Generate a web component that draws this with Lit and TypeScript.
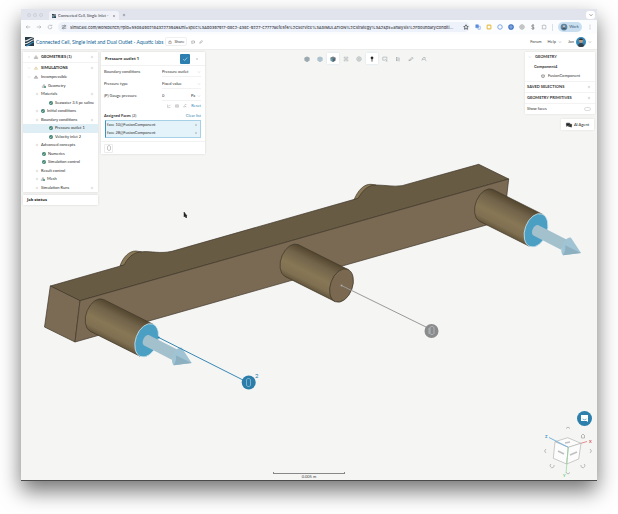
import { LitElement, html, css, svg } from "lit";
import { customElement } from "lit/decorators.js";
import { classMap } from "lit/directives/class-map.js";

const paths: Record<string, unknown> = {
  down: svg`<path d="M4 6l4 4 4-4"/>`,
  right: svg`<path d="M6 4l4 4-4 4"/>`,
  plus: svg`<path d="M8 3v10M3 8h10"/>`,
  close: svg`<path d="M4 4l8 8M12 4l-8 8"/>`,
  check: svg`<path d="M3 8l4 4 7-8"/>`,
  back: svg`<path d="M14 8H3M7 4L3 8l4 4"/>`,
  forward: svg`<path d="M2 8h11M9 4l4 4-4 4"/>`,
  reload: svg`<path d="M13 8a5 5 0 1 1-2-4M13 2v3h-3"/>`,
  tune: svg`<path d="M2 5h6M12 5h2M2 11h2M8 11h6"/><circle cx="10" cy="5" r="2"/><circle cx="6" cy="11" r="2"/>`,
  star: svg`<path d="M8 2l2 4 4 1-3 3 1 4-4-2-4 2 1-4-3-3 4-1z" stroke-width="2"/>`,
  dots: svg`<path d="M8 2v2M8 7v2M8 12v2" stroke-width="2"/>`,
  lock: svg`<path d="M3 7h10v7H3zM5 7V4l3-2 3 2v3"/>`,
  comment: svg`<path d="M3 4h11v8H8l-5 2z"/>`,
  pen: svg`<path d="M3 13l1-4 7-7 3 3-7 7z"/>`,
  mesh: svg`<path d="M8 2l3 3v3H5V5zM4 9l3 2v3H1v-3zM12 9l3 2v3H9v-3z"/>`,
  meshDone: svg`<path d="M8 1l3 3v3H5V4zM4 8l3 2v4H1v-4z" stroke="#555"/><circle cx="12" cy="12" r="4" fill="#3d8270" stroke="none"/>`,
  sims: svg`<path d="M8 3l3 4H5zM4 9l3 4H1zM12 9l3 4H9z"/>`,
  cube: svg`<path d="M8 2l6 3v7l-6 3-6-3V5zM2 5l6 3 6-3M8 8v7"/>`,
  cubeFull: svg`<path d="M8 2l6 3v7l-6 3-6-3V5z" fill="#9fb0b8"/><path d="M2 5l6 3 6-3M8 8v7"/>`,
  cubeBlue: svg`<path d="M8 2l6 3v7l-6 3-6-3V5z" fill="#b5ccd7" stroke="#93adba"/><path d="M2 5l6 3 6-3M8 8v7" stroke="#93adba"/>`,
  cubeDark: svg`<path d="M8 2l6 3-6 3-6-3z" fill="#74838c" stroke="#55636b"/><path d="M2 5l6 3v7l-6-3z" fill="#58b0cd" stroke="#55636b"/><path d="M14 5L8 8v7l6-3z" fill="#55636b" stroke="#55636b"/>`,
  wire: svg`<path d="M3 3h3M10 3h3M3 13h3M10 13h3M3 3v3M13 3v3M3 10v3M13 10v3M8 2v12M3 8h10"/>`,
  sphere: svg`<circle cx="8" cy="8" r="6"/><path d="M2 8h12M8 2v12"/>`,
  pin: svg`<circle cx="8" cy="5" r="3" fill="currentColor"/><path d="M8 6v9" stroke-width="2"/>`,
  boxsel: svg`<path d="M2 3h11v7M2 3v8h7M9 8l5 6M10 14l4-1"/>`,
  layers: svg`<path d="M3 4l10 2M3 8l10 1M3 12l10 1M4 3v10"/>`,
  ruler: svg`<path d="M2 13L11 3l3 3-8 5zM3 9l3 4"/>`,
  probe: svg`<path d="M2 12l4-8h5v5l3 5M3 9h7"/>`,
  chart: svg`<path d="M2 2v12h12M5 10l3-4 2 2 4-5"/>`,
  table: svg`<path d="M2 3h12v10H2zM2 8h12M8 3v10"/>`,
  fx: svg`<path d="M2 9l2 4 4-11h6M8 8l5 5M13 8l-5 5"/>`,
  cylinder: svg`<path d="M4 4c0-3 8-3 8 0v8c0 3-8 3-8 0z"/>`,
  done: svg`<circle cx="8" cy="8" r="8" fill="#3d8270" stroke="none"/><path d="M4 8l3 3 5-6" stroke="#fff" stroke-width="2"/>`,
  bubble: svg`<path d="M1 3h9v6H5l-3 3V9H1z" fill="currentColor"/><path d="M11 6h4v6h-1v2l-3-2H7v-2h4z" fill="currentColor"/>`,
  puzzle: svg`<path d="M3 4h3c0-3 4-3 4 0h3v9H3v-3c2 0 2-3 0-3z"/>`,
  tag: svg`<path d="M11 4C7 1 3 4 5 7c2 2 6 1 6 4s-5 3-7 1M8 1v14" stroke-width="2"/>`,
  square: svg`<rect x="3" y="3" width="10" height="10" rx="2" stroke-width="3"/>`,
  ring: svg`<circle cx="8" cy="8" r="6" stroke-width="2"/>`,
  disc: svg`<circle cx="8" cy="8" r="6" fill="#7fa3d8" stroke-width="3"/>`,
  person: svg`<circle cx="8" cy="8" r="9" fill="#5c88a5" stroke="none"/><circle cx="8" cy="6" r="3" fill="#d8bda8" stroke="none"/><path d="M3 14c1-5 9-5 10 0" fill="#40525f" stroke="none"/>`,
  trans: svg`<path d="M2 2h7v8H2z" fill="currentColor"/><path d="M8 6h6v8H8z"/>`,
  logo: svg`<path d="M0 0h16v16H0z" fill="#2a3b48" stroke="none"/><path d="M0 7C6 7 8 2 16 1M0 12c7 0 9-6 16-7" stroke="#e8eef2" stroke-width="2"/><path d="M2 16c6-1 8-6 14-7" stroke="#3a8fc0" stroke-width="2"/>`,
};

const icon = (name: string, cls = "") =>
  html`<svg class="icon ${cls}" viewBox="0 0 16 16" aria-hidden="true">${paths[name]}</svg>`;

const shared = css`
  :host { display: block; box-sizing: border-box; }
  * { box-sizing: border-box; }
  button, input, select {
    font: inherit; color: inherit; border: 0; margin: 0; padding: 0;
    background: none; border-radius: 0; appearance: none; outline: 0;
  }
  a { color: inherit; text-decoration: none; }
  button { display: flex; align-items: center; justify-content: center; }
  .icon {
    width: 6px; height: 6px; flex: none; display: block; fill: none;
    stroke: currentColor; stroke-width: 1.3; overflow: visible;
  }
  .icon.s { width: 4px; height: 4px; }
  .grow { flex: 1; min-width: 0; }
  h2, h3 { margin: 0; font: inherit; font-weight: 700; }
  ul { margin: 0; padding: 0; list-style: none; }
`;

@customElement("browser-bar")
class BrowserBar extends LitElement {
  static styles = [shared, css`
    .tabs { display: flex; align-items: center; height: 11px; padding: 0 2px 0 6px; background: #e1e4ed; color: #30333a; }
    .lights { display: flex; gap: 2px; width: 22px; }
    .lights i { width: 4px; height: 4px; border: 1px solid #cfd1d7; border-radius: 50%; }
    .tab { display: flex; align-items: center; gap: 2px; height: 9px; align-self: flex-end; width: 70px; padding: 0 3px; background: #f0f2f8; border-radius: 3px 3px 0 0; }
    .name { flex: 1; overflow: hidden; white-space: nowrap; }
    .new { margin-left: 3px; }
    .menu { width: 9px; height: 8px; border-radius: 3px; background: #fff; }
    .bar { display: flex; align-items: center; height: 14px; padding: 0 4px; gap: 5px; background: #fbfcfe; color: #8b8f96; }
    .url { flex: 1; min-width: 0; display: flex; align-items: center; gap: 3px; height: 10px; padding: 0 1px 0 3px; border-radius: 5px; background: #eef2fa; color: #3c4046; }
    .url input { flex: 1; min-width: 0; height: 8px; font-family: Inter, sans-serif; font-weight: 500; text-overflow: ellipsis; }
    .ext { display: flex; gap: 5px; }
    .blue { color: #5b8ee0; } .gold { color: #e8bf4a; } .navy { color: #3c6fc4; } .grey { color: #777; }
    .work { gap: 2px; width: 24px; height: 10px; border-radius: 5px; background: #c9dff0; color: #41607a; }
    .sep { width: 1px; height: 7px; background: #dcdfe6; }
    .nav { display: flex; gap: 5px; }
  `];
  render() {
    return html`
      <div class="tabs">
        <span class="lights"><i></i><i></i><i></i></span>
        <div class="tab">${icon("logo", "s")}<span class="name">Connected Cell, Single Inlet -</span>
          <button aria-label="Close tab">${icon("close", "s")}</button></div>
        <button class="new" aria-label="New tab">${icon("plus", "s")}</button>
        <span class="grow"></span>
        <button class="menu" aria-label="Search tabs">${icon("down")}</button>
      </div>
      <div class="bar">
        <div class="nav">
          <button aria-label="Back">${icon("back")}</button>
          <button aria-label="Forward">${icon("forward")}</button>
          <button aria-label="Reload">${icon("reload")}</button>
        </div>
        <div class="url">${icon("tune")}
          <input aria-label="Address" value="simscale.com/workbench/?pid=5508490218432273946&mi=spec%3Ad0397917-d8c2-438c-9227-c7777aefe5f6%2Cservice%3ASIMULATION%2Cstrategy%3A2&ps=analysis%2FboundaryConditi..." />
          ${icon("star")}</div>
        <div class="ext">
          ${icon("trans", "blue")}${icon("square", "gold")}${icon("ring", "blue")}${icon("disc", "navy")}${icon("sphere", "grey")}${icon("tag", "grey")}${icon("puzzle")}
        </div>
        <i class="sep"></i>
        <button class="work">${icon("person")}Work</button>
        <button aria-label="Browser menu">${icon("dots")}</button>
      </div>`;
  }
}

@customElement("app-header")
class AppHeader extends LitElement {
  static styles = [shared, css`
    header { display: flex; align-items: center; gap: 2px; height: 15px; padding: 0 5px 0 4px; background: #fff; color: #444; }
    h1 { margin: 0; font-size: 5px; font-weight: 400; color: #0e6294; white-space: nowrap; }
    .logo { width: 9px; height: 9px; }
    .share { gap: 2px; width: 22px; height: 9px; border: 1px solid #f0f0f0; border-radius: 2px; margin-right: 1px; }
    .tool { width: 6px; }
    .right { display: flex; align-items: center; gap: 6px; }
    .help, .user { display: flex; align-items: center; gap: 2px; }
  `];
  render() {
    return html`<header>
      ${icon("logo", "logo")}
      <h1>Connected Cell, Single Inlet and Dual Outlet - Aquatic labs</h1>
      <button class="share">${icon("lock", "s")}Share</button>
      <button class="tool" aria-label="Comments">${icon("comment", "s")}</button>
      <button class="tool" aria-label="Edit">${icon("pen", "s")}</button>
      <span class="grow"></span>
      <nav class="right">
        <a href="#forum">Forum</a>
        <a class="help" href="#help">Help ${icon("down", "s")}</a>
        <button class="user">Jon
          <svg width="10" height="10" viewBox="0 0 10 10" aria-hidden="true">
            <circle cx="5" cy="5" r="5" fill="#3288b8"/><path d="M2 9c0-4 6-4 6 0a5 5 0 0 1-6 0" fill="#35404a"/>
            <circle cx="5" cy="4" r="2" fill="#c99a7c"/><path d="M3 3c0-2 4-2 4 0z" fill="#3b2e28"/>
          </svg>${icon("down", "s")}</button>
      </nav>
    </header>`;
  }
}

interface Item { label: string; depth: number; mark?: string; caret?: boolean; add?: boolean; on?: boolean }

@customElement("sim-tree")
class SimTree extends LitElement {
  static items: Item[] = [
    { label: "Incompressible", depth: 0, mark: "sims", caret: true },
    { label: "Geometry", depth: 2, mark: "meshDone" },
    { label: "Materials", depth: 1, caret: true, add: true },
    { label: "Seawater 3.5 pc saline", depth: 3, mark: "done" },
    { label: "Initial conditions", depth: 1, mark: "done", caret: true },
    { label: "Boundary conditions", depth: 1, caret: true, add: true },
    { label: "Pressure outlet 1", depth: 3, mark: "done", on: true },
    { label: "Velocity inlet 2", depth: 3, mark: "done" },
    { label: "Advanced concepts", depth: 1, caret: true },
    { label: "Numerics", depth: 2, mark: "done" },
    { label: "Simulation control", depth: 2, mark: "done" },
    { label: "Result control", depth: 1, caret: true },
    { label: "Mesh", depth: 1, mark: "meshDone", caret: true },
    { label: "Simulation Runs", depth: 1, caret: true, add: true },
  ];
  static styles = [shared, css`
    .panel { background: #fff; box-shadow: 0 0 2px #d4d4d4; }
    h2 { display: flex; align-items: center; gap: 3px; height: 11px; padding: 0 4px; border-bottom: 1px solid #f3f3f3; }
    h2 .sub { color: #555; } .warn { color: #b79a3c; }
    .tail { height: 10px; border: 0; }
    ul { display: grid; grid-auto-rows: 1fr; height: 119px; }
    li { display: flex; align-items: center; gap: 2px; padding: 0 4px; color: #2a2a2a; white-space: nowrap; }
    .d0 { gap: 3px; } .d1 { padding-left: 12px; } .d2 { padding-left: 19px; } .d3 { padding-left: 26px; }
    .on { background: #dfeef5; }
    .caret, .add { color: #aaa; }
    .job { margin-top: 3px; font-family: "Open Sans", sans-serif; }
  `];
  render() {
    return html`
      <section class="panel">
        <h2>${icon("right", "s caret")}${icon("mesh", "s sub")}<span class="grow">GEOMETRIES (1)</span>${icon("plus", "s add")}</h2>
        <h2 class="tail">${icon("down", "s caret")}${icon("sims", "s warn")}<span class="grow">SIMULATIONS</span>${icon("plus", "s add")}</h2>
        <ul>${SimTree.items.map((i) => html`
          <li class=${classMap({ [`d${i.depth}`]: true, on: !!i.on })}>
            ${i.caret ? icon(i.label === "Incompressible" ? "down" : "plus", "s caret") : ""}
            ${i.mark ? icon(i.mark, "s") : ""}<span class="grow">${i.label}</span>
            ${i.add ? icon("plus", "s add") : ""}
          </li>`)}</ul>
      </section>
      <section class="panel job"><h2 class="tail">Job status</h2></section>`;
  }
}

@customElement("boundary-panel")
class BoundaryPanel extends LitElement {
  static styles = [shared, css`
    form { background: #fff; box-shadow: 0 0 2px #d4d4d4; color: #333; }
    .head { display: flex; align-items: center; gap: 2px; height: 14px; padding: 0 3px 0 4px; border-bottom: 1px solid #f2f2f2; color: #333; }
    .head h2 { font-family: "Open Sans", sans-serif; font-weight: 700; }
    .apply { width: 10px; height: 10px; background: #2c7fb0; color: #fff; border-radius: 1px; }
    .x { width: 10px; height: 10px; color: #999; }
    .fields { display: grid; grid-template-columns: 58px 1fr; align-items: center; grid-auto-rows: 11px; row-gap: 1px; padding: 0 4px 0 3px; }
    .pick { display: flex; align-items: center; color: #999; border-bottom: 1px solid #f2f2f2; height: 11px; padding-top: 1px; }
    .pick select, .pick input { flex: 1; min-width: 0; width: 0; color: #333; }
    .pick .unit { flex: none; width: 6px; }
    .tools, .cap { display: flex; align-items: center; justify-content: flex-end; gap: 4px; height: 10px; padding: 0 4px 0 3px; color: #888; }
    .cap { height: 9px; justify-content: space-between; color: #333; }
    .link { color: #3d88b2; }
    .faces { margin: 0 4px; padding: 0 1px; background: #e4f2f9; border: 1px solid #a5d0e6; border-left-color: #3d92c0; }
    .faces li { display: flex; align-items: center; height: 8px; padding-right: 1px; }
    .faces .icon, .muted { color: #888; }
    .foot { display: flex; height: 13px; align-items: center; margin-top: 3px; padding-left: 3px; border-top: 1px solid #f2f2f2; }
    .foot button { width: 9px; height: 9px; border: 1px solid #ececec; border-radius: 1px; }
  `];
  render() {
    return html`<form @submit=${(e: Event) => e.preventDefault()}>
      <div class="head"><h2 class="grow">Pressure outlet 1</h2>
        <button class="apply" aria-label="Apply">${icon("check")}</button>
        <button class="x" type="button" aria-label="Close">${icon("close", "s")}</button></div>
      <div class="fields">
        <label for="kind">Boundary conditions</label>
        <div class="pick"><select id="kind"><option>Pressure outlet</option></select>${icon("down", "s")}</div>
        <label for="type">Pressure type</label>
        <div class="pick"><select id="type"><option>Fixed value</option></select>${icon("down", "s")}</div>
        <label for="gauge">(P) Gauge pressure</label>
        <div class="pick"><input id="gauge" value="0" /><select class="unit" aria-label="Unit"><option>Pa</option></select>${icon("down", "s")}</div>
      </div>
      <div class="tools">${icon("chart", "s")}${icon("table", "s")}${icon("fx", "s")}<button class="link" type="button">Reset</button></div>
      <div class="cap"><span><b>Assigned Faces</b> (2)</span><button class="link" type="button">Clear list</button></div>
      <ul class="faces">
        <li><span class="grow">face 10@FusionComponent</span>${icon("close", "s")}</li>
        <li><span class="grow">face 28@FusionComponent</span>${icon("close", "s")}</li>
      </ul>
      <div class="foot"><button type="button" aria-label="Body selection">${icon("cylinder", "muted")}</button></div>
    </form>`;
  }
}

@customElement("geometry-panel")
class GeometryPanel extends LitElement {
  static styles = [shared, css`
    .panel { background: #fff; box-shadow: 0 0 2px #dcdcdc; color: #333; }
    .row { display: flex; align-items: center; gap: 3px; height: 11px; padding: 0 4px 0 2px; border-bottom: 1px solid #f3f3f3; }
    .top, .comp { padding-left: 3px; border: 0; }
    .top { height: 10px; }
    .comp { height: 10px; padding-left: 9px; }
    .leaf { height: 10px; padding: 0 0 2px 16px; }
    .last { height: 10px; border: 0; }
    .toggle { width: 7px; height: 4px; border: 1px solid #ddd; border-radius: 2px; }
    .agent { margin: 5px 1px 0 auto; width: 33px; height: 11px; gap: 2px; background: #fff; box-shadow: 0 0 2px #dcdcdc; }
    .muted { color: #999; }
  `];
  render() {
    return html`
      <section class="panel">
        <h3 class="row top">${icon("down", "s muted")}GEOMETRY</h3>
        <div class="row comp"><b>Component4</b></div>
        <div class="row leaf">${icon("cube", "s")}FusionComponent</div>
        <h3 class="row"><span class="grow">SAVED SELECTIONS</span>${icon("plus", "s muted")}</h3>
        <h3 class="row"><span class="grow">GEOMETRY PRIMITIVES</span>${icon("plus", "s muted")}</h3>
        <div class="row last"><label class="grow" for="faces">Show faces</label><input class="toggle" type="checkbox" id="faces" /></div>
      </section>
      <button class="agent">${icon("bubble")}AI Agent</button>`;
  }
}

const pipe = (x: number, y: number, open: boolean) => svg`
  <g transform="translate(${x} ${y})">
    <path class="edge" fill="url(#pipe)" d="M6.700-15.900L-43.300-40.900A11 17.300 20 0 0-56.700-9.100L-6.700 15.900Z"/>
    <ellipse class=${open ? "lip" : "edge cap"} rx="11" ry="17.300" transform="rotate(20)"/>
    ${open ? svg`
      <path class="shaft" d="M2-5.300L31 9.500 25 19.500-3 5C-6 2-2-6 2-5.300Z"/>
      <path class="cone" d="M35 7.400L45 22.700 27 25C22 20 29 6 35 7.400Z"/>
      <path class="shade" d="M27 25C29 22 30 18 29 15L45 22.700Z"/>` : ""}
  </g>`;

@customElement("model-view")
class ModelView extends LitElement {
  static styles = [shared, css`
    .scene { display: block; width: 100%; height: 100%; }
    .edge { stroke: #3f3728; stroke-width: .7; }
    .top { fill: #685b44; } .front { fill: #7a6a54; } .end { fill: #7c6b54; } .disc { fill: #8b7a59; }
    .cap { fill: #7a6850; }
    .lip { fill: #4a9fc3; stroke: #d4e8f0; stroke-width: .7; }
    .shaft { fill: #a3c0cd; } .cone { fill: #a0c4d4; } .shade { fill: #8cb0c0; }
    .wire { stroke: #3688b3; stroke-width: 1; } .wire2 { stroke: #999; stroke-width: 1; }
    .n { fill: #2c7eaa; font-size: 6px; }
    .glyph { fill: none; stroke: #cfe3ee; stroke-width: .5; }
  `];
  render() {
    return html`<svg class="scene" viewBox="21 49 576 431" role="img" aria-label="Manifold model">
      <defs><linearGradient id="pipe" gradientUnits="userSpaceOnUse" x1="7.600" y1="-15.200" x2="-7.600" y2="15.200">
        <stop offset="0" stop-color="#54472f"/><stop offset=".25" stop-color="#71634a"/>
        <stop offset=".6" stop-color="#877755"/><stop offset=".85" stop-color="#807052"/><stop offset="1" stop-color="#65573d"/>
      </linearGradient></defs>
      <path class="edge disc" d="M120 266C123 257 129 251 136 251L142 252V262Z"/>
      <path class="edge disc" d="M354 200C358 190 364 184 371 184.300L376 185V197Z"/>
      <path class="edge top" d="M50.300 286L124 265C129 256 134 252 143 251.700C151 251 160 254 172 251.300L358 198.300C363 190 368 185 376 185C385 185 393 187 402 185.700L478.700 164.300 508.700 179 80 300.700Z"/>
      <path class="edge end" d="M50.300 286L80 300.700 75 342 44.500 327Z"/>
      <path class="edge front" d="M80 300.700L508.700 179 504 220 75 342Z"/>
      ${pipe(146.7, 340.3, true)}${pipe(341.5, 285.5, false)}${pipe(536, 230.3, true)}
      <path class="wire" d="M158.700 337.500L243 380"/>
      <circle cx="158.700" cy="337.500" r="1" fill="#2c7eaa"/>
      <circle cx="248.700" cy="382.500" r="7" fill="#2c7eaa"/>
      <path class="glyph" d="M246.500 380c0-2 4-2 4 0v5c0 2-4 2-4 0z"/>
      <text class="n" x="255" y="378">2</text>
      <path class="wire2" d="M341.500 285.500L426 327"/>
      <circle cx="341.500" cy="285.500" r="1" fill="#aaa"/>
      <circle cx="431.500" cy="331" r="7" fill="#8b8b8b"/>
      <path class="glyph" d="M430 328c0-2 4-2 4 0v5c0 2-4 2-4 0zM428 329h2M428 331h2M428 333h2"/>
      <path d="M184 212v5l1-1 1 2 1-1-1-1h1z" fill="#222" stroke="#222" stroke-width=".5"/>
    </svg>`;
  }
}

@customElement("nav-cube")
class NavCube extends LitElement {
  static styles = [shared, css`
    svg { display: block; }
    .face { fill: #fcfcfc; stroke: #aaa; stroke-width: .6; }
    .arrow { fill: none; stroke: #aaa; stroke-width: .8; }
    text { font-size: 4px; font-weight: 700; }
  `];
  render() {
    return html`<svg width="50" height="56" viewBox="543 424 50 56" role="img" aria-label="View orientation">
      <path class="face" d="M567.700 437.700L581 443.300 568.300 447.300 555 441.700Z"/>
      <path class="face" d="M555 441.700L568.300 447.300 566.700 464 553.300 458.300Z"/>
      <path class="face" d="M568.300 447.300L581 443.300 578.700 459 566.700 464Z"/>
      <path stroke="#7ab4dc" d="M549 437.500L568.300 447.300"/><path stroke="#e58d8d" d="M581 443.300L587 441.500"/>
      <path stroke="#8ed88e" stroke-width=".7" d="M568.300 447.300L566 473"/>
      <path stroke="#999" stroke-width="1.500" opacity=".6" d="M558 451l6 3M570 455l7-3M565 443l5-1"/>
      <text x="545" y="437.500" fill="#3d8fc8">Z</text><text x="589" y="442.500" fill="#d34a4a">X</text><text x="563" y="477" fill="#57c257">Y</text>
      <path class="arrow" d="M566 428.500l2-1.500 2 1.500M566 472.500l2 1.500 2-1.500M546 449l-1.500 2 1.500 2M590 449l1.500 2-1.500 2M581 436l2-2 2 2M581.500 436v2h3v-2M551 464a2 2 0 1 0 3 1M584 464a2 2 0 1 1-3 1"/>
    </svg>`;
  }
}

@customElement("app-root")
class AppRoot extends LitElement {
  static tools = ["cubeFull", "cubeBlue", "cubeDark", "wire", "sphere", "pin", "boxsel", "layers", "ruler", "probe"];
  static styles = [shared, css`
    :host { min-height: 100vh; padding: 9px 21px 33px; display: flex; background: #fff; font: 4px/6px Lato, "Open Sans", sans-serif; color: #222; }
    .window { flex: 1; min-width: 0; display: flex; flex-direction: column; background: #f5f5f4; border-bottom: 1px solid #4a4a4a; box-shadow: 0 10px 20px rgba(0, 0, 0, .55); }
    .stage { flex: 1; position: relative; display: flex; flex-direction: column; box-shadow: inset 0 1px 0 #ececec; }
    model-view { position: absolute; inset: 0; }
    .panels { position: relative; display: flex; align-items: flex-start; gap: 3px; padding: 3px 2px 0; }
    sim-tree { width: 75px; } boundary-panel { width: 104px; } geometry-panel { width: 70px; }
    .tools { flex: 1; display: flex; justify-content: center; gap: 1px; margin-top: 1px; color: #8d959a; }
    .tools button { width: 12px; height: 11px; }
    .tools .on { background: #fff; box-shadow: 0 0 2px #cfe3ee; color: #222; }
    .scale { position: absolute; left: 50%; bottom: 0; width: 72px; margin-left: -36px; text-align: center; color: #444; }
    .scale i { display: block; height: 2px; border: 1px solid #888; border-top: 0; }
    .corner { position: absolute; right: 4px; bottom: 0; display: flex; flex-direction: column; align-items: flex-end; }
    .chat { width: 15px; height: 15px; margin-right: 1px; border-radius: 50%; background: #2c80ab; color: #fff; }
    nav-cube { margin-top: -2px; }
  `];
  render() {
    return html`<main class="window">
      <browser-bar></browser-bar>
      <app-header></app-header>
      <div class="stage">
        <model-view></model-view>
        <div class="panels">
          <sim-tree></sim-tree>
          <boundary-panel></boundary-panel>
          <div class="tools">${AppRoot.tools.map((t) => html`
            <button aria-label=${t} class=${classMap({ on: t === "cubeDark" || t === "pin" })}>${icon(t)}</button>`)}</div>
          <geometry-panel></geometry-panel>
        </div>
        <div class="scale"><i></i>0.005 m</div>
        <div class="corner">
          <button class="chat" aria-label="Chat">
            <svg width="7" height="7" viewBox="0 0 7 7" aria-hidden="true"><path d="M0 0h7v7L5.500 6H0z" fill="#fff"/><path d="M1.500 4q2 1.500 4 0" fill="none" stroke="#2c80ab" stroke-width=".6"/></svg>
          </button>
          <nav-cube></nav-cube>
        </div>
      </div>
    </main>`;
  }
}
